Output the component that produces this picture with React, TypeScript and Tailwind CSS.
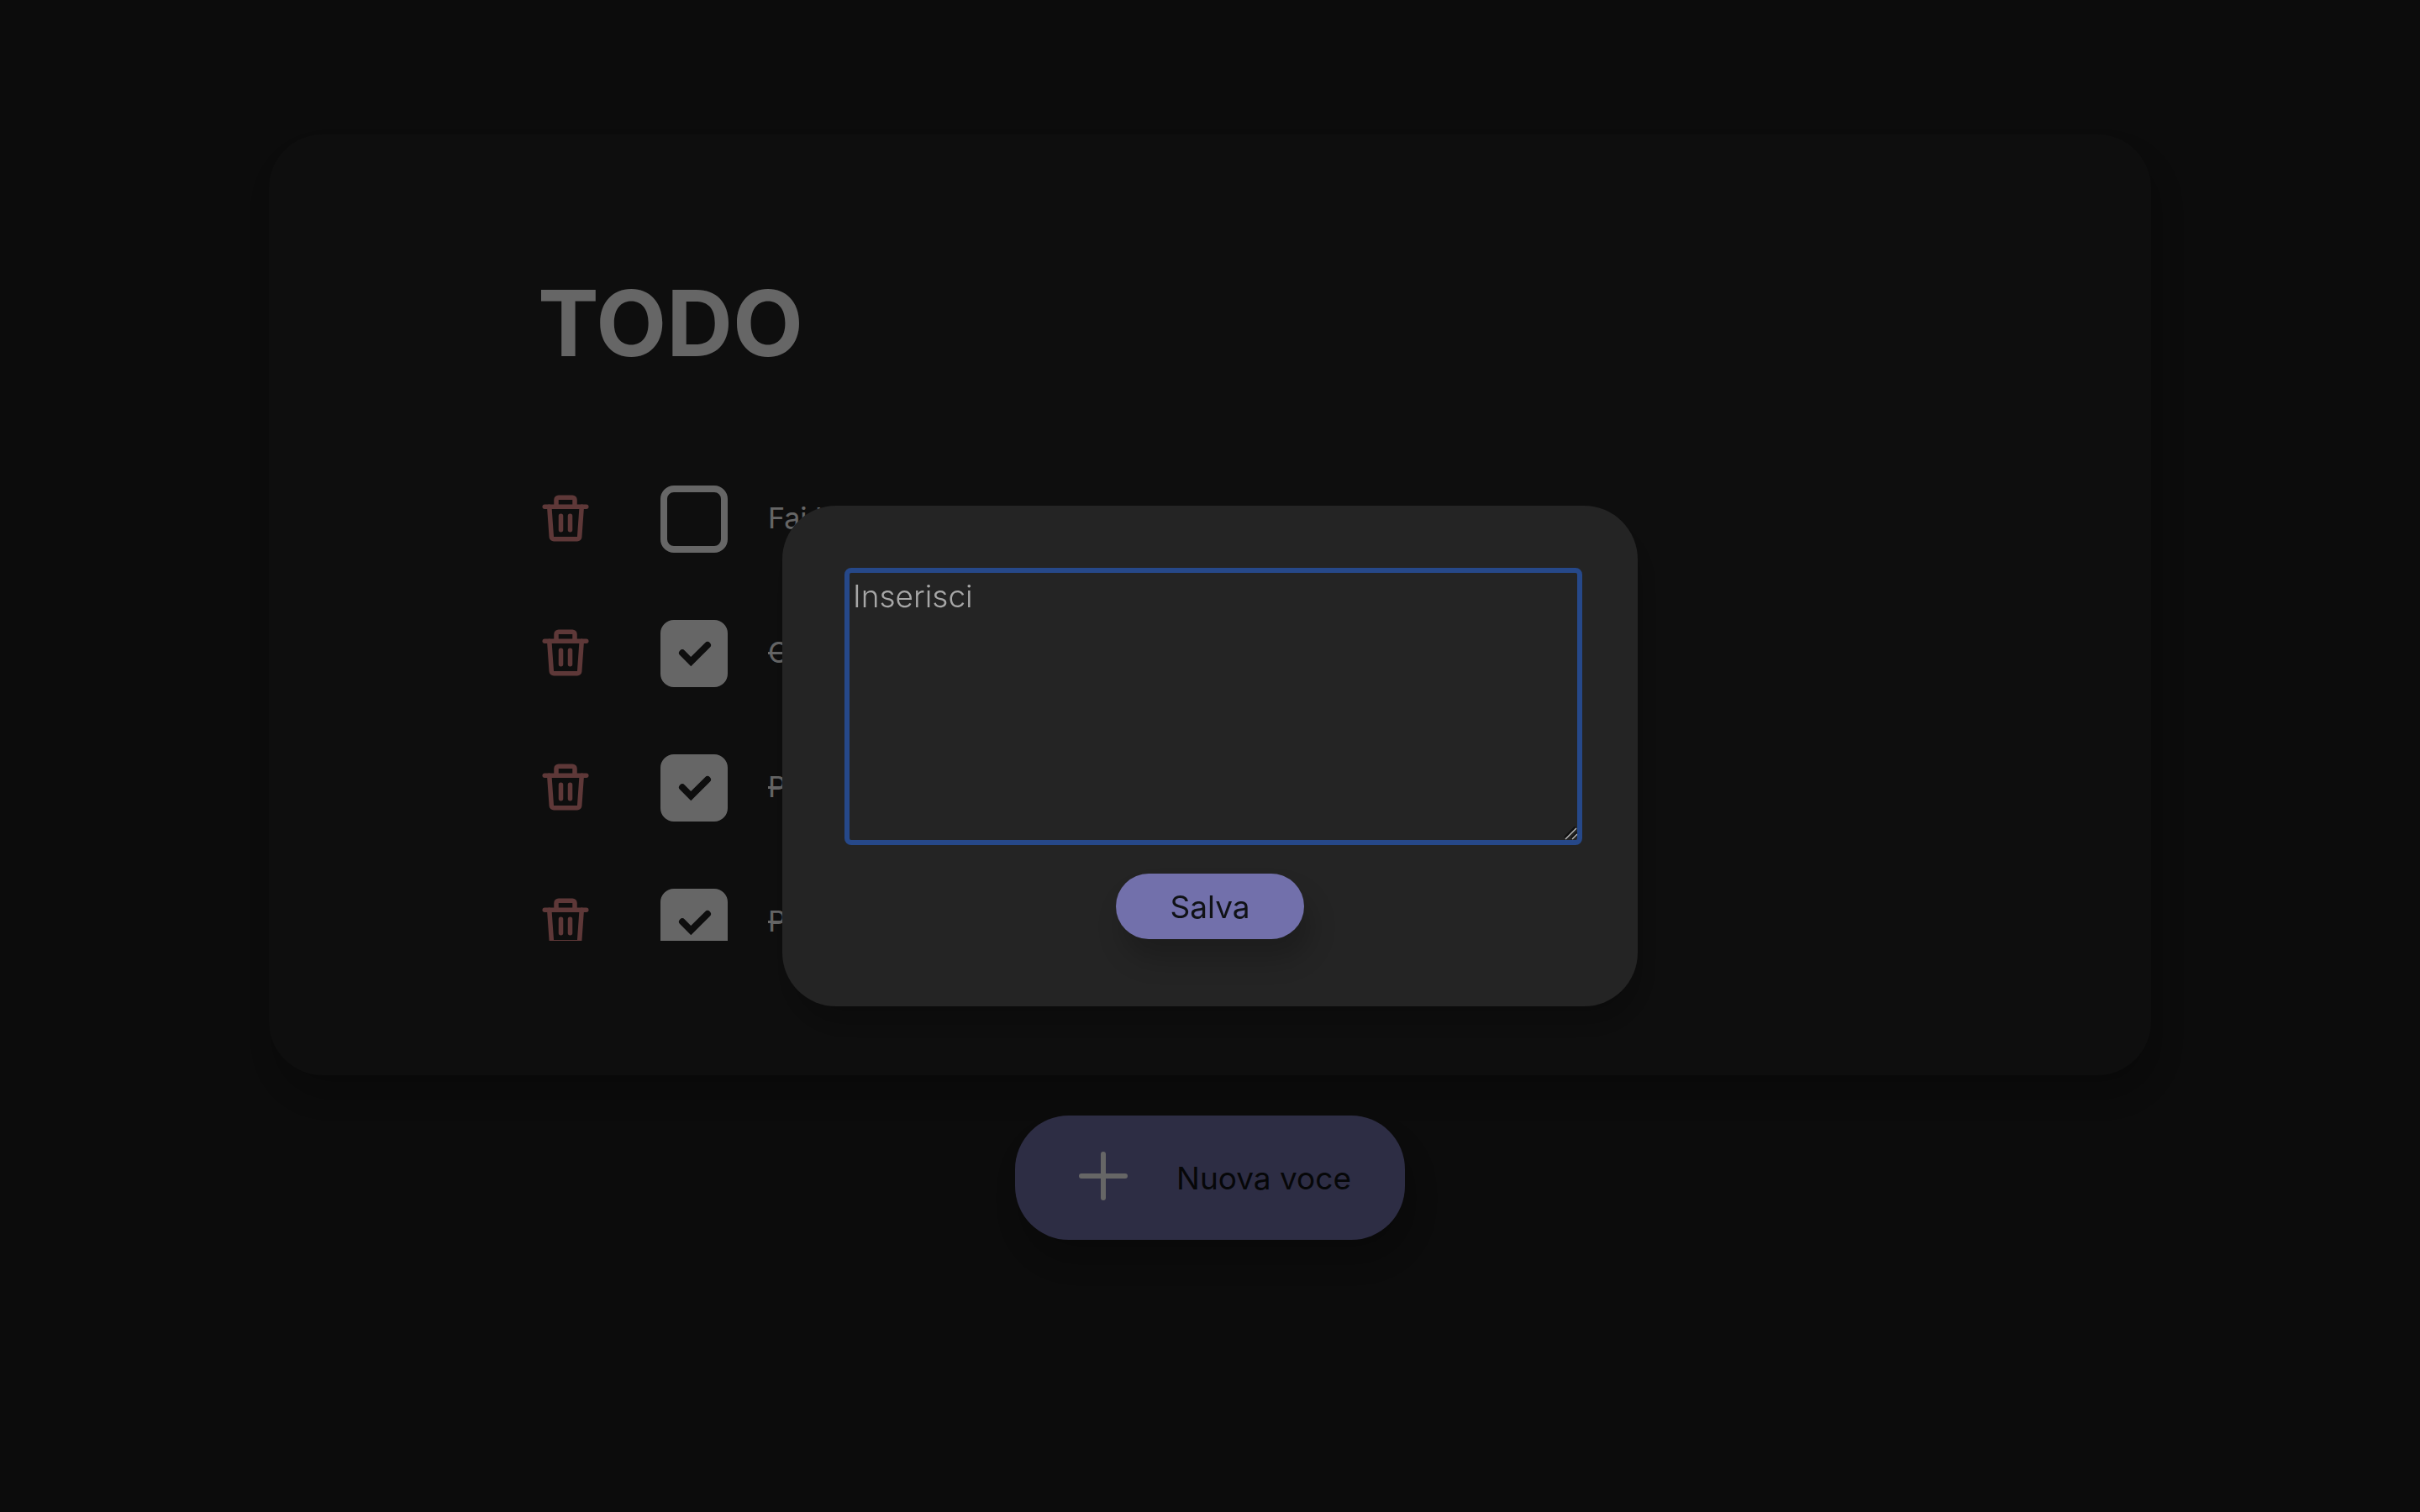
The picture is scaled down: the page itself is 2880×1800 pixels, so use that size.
import { useState } from "react";

type Todo = { id: number; text: string; done: boolean };

const initialTodos: Todo[] = [
  { id: 1, text: "Fai la", done: false },
  { id: 2, text: "C", done: true },
  { id: 3, text: "P", done: true },
  { id: 4, text: "P", done: true },
];

function TrashIcon() {
  return (
    <svg
      viewBox="0 0 24 24"
      className="size-[66px]"
      fill="none"
      stroke="currentColor"
      strokeWidth="2"
      strokeLinecap="round"
      aria-hidden="true"
    >
      <path d="M3 7h18" />
      <path d="M8 7V4a1 1 0 0 1 1-1h6a1 1 0 0 1 1 1v3" />
      <path d="M5 7l.93 13.07a1 1 0 0 0 1 .93h10.14a1 1 0 0 0 1-.93L19 7" />
      <path d="M10 11v6M14 11v6" />
    </svg>
  );
}

function TodoRow({
  todo,
  onToggle,
  onDelete,
}: {
  todo: Todo;
  onToggle: () => void;
  onDelete: () => void;
}) {
  return (
    <li className="flex h-20 shrink-0 items-center">
      <button
        type="button"
        aria-label="Elimina"
        onClick={onDelete}
        className="mr-20 pb-0.5 text-[#eb8c8c]"
      >
        <TrashIcon />
      </button>
      <label className="flex items-center gap-12">
        <span className="grid size-20">
          <input
            type="checkbox"
            checked={todo.done}
            onChange={onToggle}
            className="peer col-start-1 row-start-1 size-20 appearance-none rounded-2xl border-8 border-white checked:bg-white"
          />
          <svg
            viewBox="0 0 80 80"
            className="pointer-events-none col-start-1 row-start-1 hidden size-20 text-[#242424] peer-checked:block"
            fill="none"
            stroke="currentColor"
            strokeWidth="8"
            strokeLinecap="round"
            aria-hidden="true"
          >
            <path d="M26 39.3L36.3 49.7L56 30" />
          </svg>
        </span>
        <span
          className={
            todo.done
              ? "pb-0.5 text-[34px] leading-10 line-through"
              : "pb-0.5 text-[34px] leading-10"
          }
        >
          {todo.text}
        </span>
      </label>
    </li>
  );
}

export default function App() {
  const [todos, setTodos] = useState(initialTodos);
  const [draft, setDraft] = useState("");

  return (
    <div className="min-h-screen bg-[#1e1e1e] font-['Inter',sans-serif] text-white">
      <main className="flex flex-col items-center px-80 pt-40">
        <section className="w-full rounded-[64px] bg-[#242424] px-80 py-40 shadow-[8px_24px_32px_rgba(0,0,0,0.2)]">
          <h1 className="text-[109px] leading-[128px] font-bold">TODO</h1>
          <ul className="mt-[90px] flex h-[582px] flex-col gap-20 overflow-hidden pt-10">
            {todos.map((todo) => (
              <TodoRow
                key={todo.id}
                todo={todo}
                onToggle={() =>
                  setTodos(todos.map((t) => (t.id === todo.id ? { ...t, done: !t.done } : t)))
                }
                onDelete={() => setTodos(todos.filter((t) => t.id !== todo.id))}
              />
            ))}
          </ul>
        </section>
        <button
          type="button"
          className="mt-12 flex h-[148px] items-center gap-12 rounded-[64px] bg-[#7270ab] px-16 text-[37px] text-[#101216] shadow-[8px_24px_32px_rgba(0,0,0,0.2)]"
        >
          <svg
            viewBox="0 0 80 80"
            className="size-20 text-white"
            fill="none"
            stroke="currentColor"
            strokeWidth="6"
            strokeLinecap="round"
            aria-hidden="true"
          >
            <path d="M41 12v52M15 38h52" />
          </svg>
          <span className="pt-0.5">Nuova voce</span>
        </button>
      </main>

      <div className="fixed inset-0 flex items-center justify-center bg-black/60">
        <form
          role="dialog"
          aria-label="Nuova voce"
          onSubmit={(e) => e.preventDefault()}
          className="flex w-[1018px] flex-col items-center rounded-[64px] bg-[#242424] py-20 shadow-[8px_24px_32px_rgba(0,0,0,0.2)]"
        >
          <div className="w-full pr-[72px] pl-20">
            <div className="relative">
              <textarea
                aria-label="Inserisci"
                placeholder="Inserisci"
                value={draft}
                onChange={(e) => setDraft(e.target.value)}
                className="block h-[318px] w-full resize-none rounded-xs bg-transparent p-1 text-[37px] leading-12 font-light caret-transparent outline-6 outline-[#264889] placeholder:text-[#a7a7a7]"
              />
              <svg
                viewBox="0 0 16 16"
                className="pointer-events-none absolute right-0 bottom-0 size-4"
                fill="none"
                aria-hidden="true"
              >
                <path d="M1 13L14 0M9 14L16 7" stroke="#111111" strokeWidth="2" />
                <path d="M2 15L15 2M10 15L16 9" stroke="#bdbdbd" strokeWidth="1.4" />
              </svg>
            </div>
          </div>
          <button
            type="submit"
            className="mt-10 h-[78px] rounded-full bg-[#7270ab] px-16 pt-0.5 text-[37px] text-[#101216] shadow-[8px_24px_32px_rgba(0,0,0,0.2)]"
          >
            Salva
          </button>
        </form>
      </div>
    </div>
  );
}
